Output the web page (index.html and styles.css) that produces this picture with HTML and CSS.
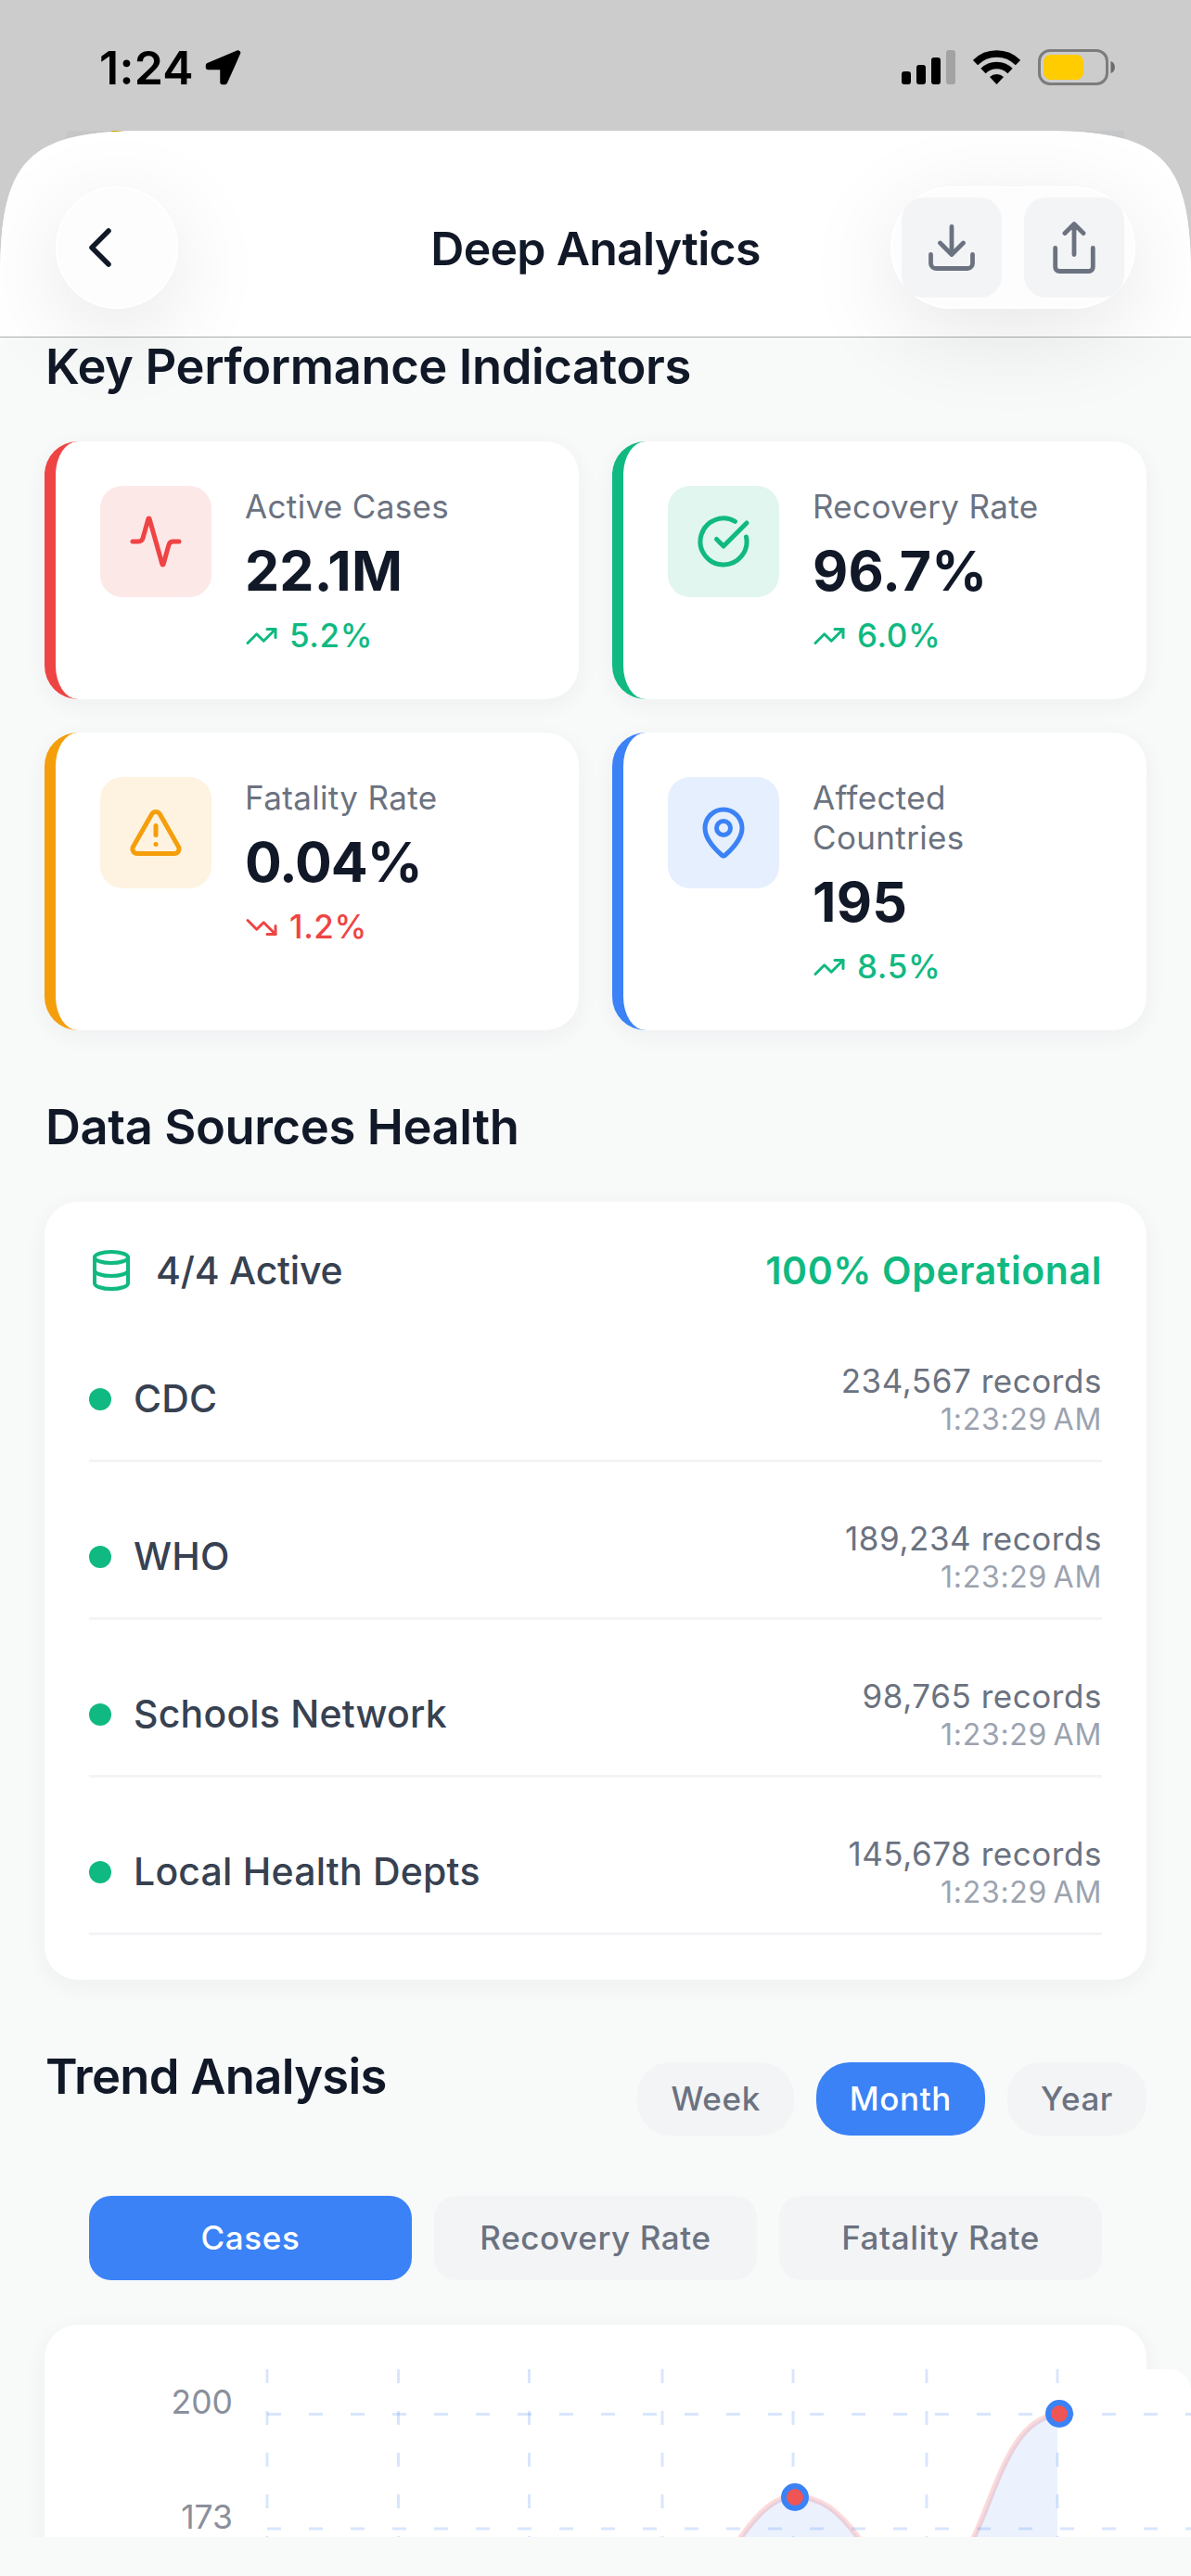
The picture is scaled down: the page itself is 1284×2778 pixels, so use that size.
FILE: index.html
```html
<!DOCTYPE html>
<html lang="en">
<head>
  <meta charset="UTF-8">
  <meta name="viewport" content="width=device-width, initial-scale=1.0">
  <title>Deep Analytics</title>
  <link rel="stylesheet" href="styles.css">
</head>
<body>
  <div class="status-bar">
    <div class="status-left">
      <span class="time">1:24</span>
      <svg class="location" width="40" height="40" viewBox="0 0 40 40">
        <path d="M36.500 4 L4.500 17.500 V19.500 H20 V35.500 H22.500 Z" stroke="#000" stroke-width="5.500" stroke-linejoin="round"/>
      </svg>
    </div>
    <div class="status-right">
      <svg width="58" height="38" viewBox="0 0 58 38">
        <rect x="0" y="23" width="10" height="14" rx="3"/>
        <rect x="16" y="16" width="10" height="21" rx="3"/>
        <rect x="32" y="8" width="10" height="29" rx="3"/>
        <rect x="48" y="0" width="10" height="37" rx="3" fill="#a3a3a3"/>
      </svg>
      <svg class="wifi" width="51" height="38" viewBox="0 0 51 38" fill="none" stroke="#000" stroke-width="7.500">
        <path d="M2.500 13.500 A32.500 32.500 0 0 1 48.500 13.500"/>
        <path d="M11 22.500 A20.500 20.500 0 0 1 40 22.500"/>
        <path d="M25.500 37 L18 29 A11 11 0 0 1 33 29 Z" fill="#000" stroke="none"/>
      </svg>
      <svg class="battery" width="83" height="40" viewBox="0 0 83 40">
        <rect x="1.500" y="1.500" width="73" height="36" rx="11.500" fill="none" stroke="#7c7c7c" stroke-width="3"/>
        <rect x="6" y="6" width="43" height="27" rx="7.500" fill="#ffcc00"/>
        <path d="M78.500 13 A7 7 0 0 1 78.500 26 Z" fill="#6b6b6b"/>
      </svg>
    </div>
  </div>

  <div class="backdrop">
    <div class="sheet">
      <header class="header">
        <button class="back">
          <svg width="132" height="132" viewBox="0 0 132 132" fill="none" stroke="#111827" stroke-width="5.500" stroke-linecap="round" stroke-linejoin="round">
            <path d="M57 48 L39 66 L57 84"/>
          </svg>
        </button>
        <h1>Deep Analytics</h1>
        <div class="actions">
          <div class="action-group">
            <button class="action">
              <svg width="108" height="108" viewBox="0 0 108 108">
                <path d="M54 31.500 V61 M41.500 49 L54 61.500 L66.500 49 M31.500 61.500 V71 A5.500 5.500 0 0 0 37 76.500 H71 A5.500 5.500 0 0 0 76.500 71 V61.500"/>
              </svg>
            </button>
            <button class="action">
              <svg width="108" height="108" viewBox="0 0 108 108">
                <path d="M54 61.500 V29 M44 38.500 L54 28.500 L64 38.500 M33.700 54.500 V75 A4.500 4.500 0 0 0 38.200 79.500 H69.800 A4.500 4.500 0 0 0 74.300 75 V54.500"/>
              </svg>
            </button>
          </div>
        </div>
      </header>

      <main class="content">
        <h2>Key Performance Indicators</h2>
        <div class="kpi-grid">
          <div class="kpi red">
            <div class="kpi-icon">
              <svg class="icon" width="60" height="60" viewBox="0 0 24 24"><path d="M22 12h-2.480a2 2 0 0 0-1.930 1.460l-2.350 8.360a.25.25 0 0 1-.48 0L9.240 2.180a.25.25 0 0 0-.48 0l-2.350 8.360A2 2 0 0 1 4.490 12H2"/></svg>
            </div>
            <div class="kpi-text">
              <div class="label">Active Cases</div>
              <div class="value">22.1M</div>
              <div class="change up">
                <svg class="icon" width="36" height="36" viewBox="0 0 24 24"><path d="M16 7h6v6"/><path d="m22 7-8.500 8.500-5-5L2 17"/></svg>
                <span>5.2%</span>
              </div>
            </div>
          </div>
          <div class="kpi green">
            <div class="kpi-icon">
              <svg class="icon" width="60" height="60" viewBox="0 0 24 24"><path d="M21.801 10A10 10 0 1 1 17 3.335"/><path d="m9 11 3 3L22 4"/></svg>
            </div>
            <div class="kpi-text">
              <div class="label">Recovery Rate</div>
              <div class="value">96.7%</div>
              <div class="change up">
                <svg class="icon" width="36" height="36" viewBox="0 0 24 24"><path d="M16 7h6v6"/><path d="m22 7-8.500 8.500-5-5L2 17"/></svg>
                <span>6.0%</span>
              </div>
            </div>
          </div>
          <div class="kpi amber">
            <div class="kpi-icon">
              <svg class="icon" width="60" height="60" viewBox="0 0 24 24"><path d="m21.730 18-8-14a2 2 0 0 0-3.480 0l-8 14A2 2 0 0 0 4 21h16a2 2 0 0 0 1.730-3"/><path d="M12 9v4"/><path d="M12 17h.01"/></svg>
            </div>
            <div class="kpi-text">
              <div class="label">Fatality Rate</div>
              <div class="value tight">0.04%</div>
              <div class="change down">
                <svg class="icon" width="36" height="36" viewBox="0 0 24 24"><path d="M16 17h6v-6"/><path d="m22 17-8.500-8.500-5 5L2 7"/></svg>
                <span>1.2%</span>
              </div>
            </div>
          </div>
          <div class="kpi blue">
            <div class="kpi-icon">
              <svg class="icon" width="60" height="60" viewBox="0 0 24 24"><path d="M20 10c0 4.993-5.539 10.193-7.399 11.799a1 1 0 0 1-1.202 0C9.539 20.193 4 14.993 4 10a8 8 0 0 1 16 0"/><circle cx="12" cy="10" r="3"/></svg>
            </div>
            <div class="kpi-text">
              <div class="label">Affected<br>Countries</div>
              <div class="value">195</div>
              <div class="change up">
                <svg class="icon" width="36" height="36" viewBox="0 0 24 24"><path d="M16 7h6v6"/><path d="m22 7-8.500 8.500-5-5L2 17"/></svg>
                <span>8.5%</span>
              </div>
            </div>
          </div>
        </div>

        <h2>Data Sources Health</h2>
        <div class="card sources">
          <div class="sources-header">
            <svg class="icon" width="48" height="48" viewBox="0 0 24 24"><ellipse cx="12" cy="5" rx="9" ry="3"/><path d="M3 5V19A9 3 0 0 0 21 19V5"/><path d="M3 12A9 3 0 0 0 21 12"/></svg>
            <span class="active-count">4/4 Active</span>
            <span class="operational">100% Operational</span>
          </div>
          <div class="source">
            <span class="dot"></span>
            <span class="name">CDC</span>
            <div class="meta">
              <div class="records">234,567 records</div>
              <div class="updated">1:23:29&#8239;AM</div>
            </div>
          </div>
          <div class="source">
            <span class="dot"></span>
            <span class="name">WHO</span>
            <div class="meta">
              <div class="records">189,234 records</div>
              <div class="updated">1:23:29&#8239;AM</div>
            </div>
          </div>
          <div class="source">
            <span class="dot"></span>
            <span class="name">Schools Network</span>
            <div class="meta">
              <div class="records">98,765 records</div>
              <div class="updated">1:23:29&#8239;AM</div>
            </div>
          </div>
          <div class="source">
            <span class="dot"></span>
            <span class="name">Local Health Depts</span>
            <div class="meta">
              <div class="records">145,678 records</div>
              <div class="updated">1:23:29&#8239;AM</div>
            </div>
          </div>
        </div>

        <div class="trend-header">
          <h2>Trend Analysis</h2>
          <div class="periods">
            <button class="period">Week</button>
            <button class="period selected">Month</button>
            <button class="period">Year</button>
          </div>
        </div>
        <div class="metrics">
          <button class="metric selected">Cases</button>
          <button class="metric">Recovery Rate</button>
          <button class="metric">Fatality Rate</button>
        </div>
        <div class="card chart-card">
          <svg class="chart" width="1188" height="600" viewBox="0 0 1188 600">
            <g class="grid">
              <path d="M192 48.500 H1188 M192 172 H1188"/>
              <path d="M192 0 V600 M333.500 0 V600 M474.500 0 V600 M618 0 V600 M759 0 V600 M903 0 V600 M1044 0 V600"/>
            </g>
            <path class="line" d="M676 228 L703 181 C722 154 740 137 761 137 C790 138 808 153 829 181 L860 225 M930 240 L954 181 C980 125 994 55 1044 48.500"/>
            <path class="area" d="M676 228 L703 181 C722 154 740 137 761 137 C790 138 808 153 829 181 L860 225 Z M930 240 L954 181 C980 125 994 55 1044 48.500 V240 Z"/>
            <circle class="point" cx="761" cy="138" r="12"/>
            <circle class="point" cx="1046" cy="48" r="12"/>
            <text x="155" y="48">200</text>
            <text x="155" y="172">173</text>
          </svg>
        </div>
      </main>
    </div>
  </div>
</body>
</html>
```
FILE: styles.css
```css
* {
  box-sizing: border-box;
}
body {
  margin: 0;
  width: 1284px;
  height: 2778px;
  overflow: hidden;
  background: #ccc;
  font-family: Inter, "Liberation Sans", sans-serif;
  color: #111827;
}
h1, h2 {
  margin: 0;
  font-weight: 600;
}
button {
  border: 0;
  padding: 0;
  font-family: inherit;
}
svg {
  display: block;
  flex-shrink: 0;
}
.icon {
  fill: none;
  stroke: currentColor;
  stroke-width: 2;
  stroke-linecap: round;
  stroke-linejoin: round;
}

/* Status bar */
.status-bar {
  height: 141px;
  padding: 4px 82px 0 107px;
  display: flex;
  justify-content: space-between;
  align-items: center;
}
.status-left,
.status-right {
  display: flex;
  align-items: center;
}
.time {
  font-size: 50px;
  font-weight: 600;
  letter-spacing: 0.3px;
  color: #000;
}
.location {
  margin-left: 11px;
}
.wifi {
  margin-left: 19px;
}
.battery {
  margin-left: 19px;
}

/* Sheet */
.backdrop {
  background:
    linear-gradient(#c8a800, #c8a800) 120px 0 / 12px 1px no-repeat,
    linear-gradient(#c5c6c8, #c5c6c8) 72px 0 / 1140px 12px no-repeat;
}
.sheet {
  height: 2637px;
  background: #f8faf9;
  clip-path: path("M0 2637 V160 C0 30 30 0 160 0 H1124 C1254 0 1284 30 1284 160 V2637 Z");
}
.header {
  position: relative;
  z-index: 1;
  height: 223px;
  padding: 60px 60px 0;
  display: grid;
  grid-template-columns: 264px 1fr 264px;
  background: #fff;
  border-bottom: 1px solid #a8abae;
}
.header h1 {
  line-height: 132px;
  padding-top: 1px;
  font-size: 50px;
  text-align: center;
  letter-spacing: -0.75px;
}
.back,
.action-group {
  background: #fdfdfd;
  border-radius: 66px;
  box-shadow: inset 0 0 0 2px #fff, 0 24px 100px rgba(0, 0, 0, 0.1);
}
.back {
  width: 132px;
  height: 132px;
}
.action-group {
  display: flex;
  gap: 24px;
  height: 132px;
  padding: 12px;
  overflow: hidden;
}
.action {
  background: #f3f4f6;
  border-radius: 24px;
}
.action svg {
  fill: none;
  stroke: #6b7280;
  stroke-width: 4.8;
  stroke-linecap: round;
  stroke-linejoin: round;
}

/* Content */
.content {
  height: 2373px;
  margin-top: -1px;
  padding: 0 48px;
  overflow: hidden;
}
h2 {
  height: 65px;
  margin-bottom: 48px;
  padding-left: 1px;
  font-size: 52.5px;
  line-height: 65px;
  letter-spacing: -0.4px;
}
.card,
.kpi {
  background: #fff;
  border-radius: 36px;
  box-shadow: 0 6px 24px rgba(30, 41, 90, 0.05);
}

/* KPI cards */
.kpi-grid {
  display: grid;
  grid-template-columns: 1fr 1fr;
  gap: 36px;
  margin-bottom: 72px;
}
.kpi {
  display: flex;
  gap: 36px;
  padding: 48px;
  border-left: 12px solid;
}
.kpi-icon {
  display: flex;
  justify-content: center;
  align-items: center;
  flex-shrink: 0;
  width: 120px;
  height: 120px;
  border-radius: 24px;
}
.kpi-text {
  margin: 1px 0 -1px;
}
.red { color: #ef4444; }
.green { color: #10b981; }
.amber { color: #f59e0b; }
.blue { color: #3b82f6; }
.red .kpi-icon { background: #fde8e8; }
.green .kpi-icon { background: #e1f6ef; }
.amber .kpi-icon { background: #fef3e1; }
.blue .kpi-icon { background: #e6effe; }
.label {
  margin-bottom: 12px;
  font-size: 35px;
  line-height: 43px;
  letter-spacing: 0.35px;
  color: #6b7280;
}
.value {
  margin-bottom: 12px;
  font-size: 59px;
  font-weight: 700;
  line-height: 72px;
  letter-spacing: 0.2px;
  color: #111827;
}
.value.tight {
  letter-spacing: -1px;
}
.change {
  display: flex;
  align-items: center;
  gap: 12px;
  font-size: 35px;
  font-weight: 500;
  line-height: 43px;
  letter-spacing: 0.6px;
}
.up { color: #10b981; }
.down { color: #ef4444; }

/* Data sources */
.sources {
  padding: 48px;
  margin-bottom: 72px;
  color: #374151;
}
.sources-header {
  display: flex;
  align-items: center;
  height: 51px;
  margin-bottom: 48px;
  font-size: 41px;
  line-height: 50px;
}
.sources-header .icon {
  color: #10b981;
}
.active-count {
  margin-left: 24px;
  font-weight: 500;
  letter-spacing: -0.2px;
}
.operational {
  margin-left: auto;
  font-weight: 600;
  letter-spacing: 0.6px;
  color: #10b981;
}
.source {
  display: flex;
  align-items: center;
  padding: 24px 0;
  border-bottom: 3px solid #f3f4f6;
}
.source + .source {
  margin-top: 36px;
}
.dot {
  width: 24px;
  height: 24px;
  border-radius: 50%;
  background: #10b981;
}
.name {
  margin: -2px 0 0 24px;
  font-size: 41px;
  font-weight: 500;
  letter-spacing: 0.2px;
}
.meta {
  margin-left: auto;
  padding-top: 1px;
  margin-bottom: -1px;
  text-align: right;
}
.records {
  font-size: 35px;
  line-height: 43px;
  letter-spacing: 0.55px;
  color: #6b7280;
}
.updated {
  font-size: 32px;
  line-height: 40px;
  letter-spacing: 0.7px;
  color: #9ca3af;
}

/* Trend */
.trend-header {
  display: flex;
  justify-content: space-between;
  align-items: center;
  margin-bottom: 48px;
}
.trend-header h2 {
  letter-spacing: -0.7px;
}
.periods {
  display: flex;
  gap: 24px;
}
.period,
.metric {
  background: #f3f4f6;
  color: #6b7280;
  font-size: 35px;
  font-weight: 500;
  line-height: 43px;
  letter-spacing: 0.6px;
}
.period {
  padding: 18px 36px;
  border-radius: 36px;
}
.metrics {
  display: grid;
  grid-template-columns: repeat(3, 1fr);
  gap: 24px;
  padding: 0 48px;
  margin-bottom: 48px;
}
.metric {
  padding: 24px 0;
  border-radius: 24px;
}
.selected {
  background: #3b82f6;
  color: #fff;
}
.chart-card {
  padding: 48px 0 0 48px;
}
.chart {
  background: #fff;
  border-radius: 24px;
}
.grid path {
  fill: none;
  stroke: #3b82f6;
  stroke-opacity: 0.2;
  stroke-width: 3;
  stroke-dasharray: 15 30;
}
.line {
  fill: none;
  stroke: #ef4444;
  stroke-opacity: 0.2;
  stroke-width: 6;
}
.area {
  fill: #3b82f6;
  fill-opacity: 0.1;
}
.point {
  fill: #ef5555;
  stroke: #3b82f6;
  stroke-width: 6;
}
.chart text {
  fill: #8a8f9b;
  font-size: 35.5px;
  text-anchor: end;
}
```
